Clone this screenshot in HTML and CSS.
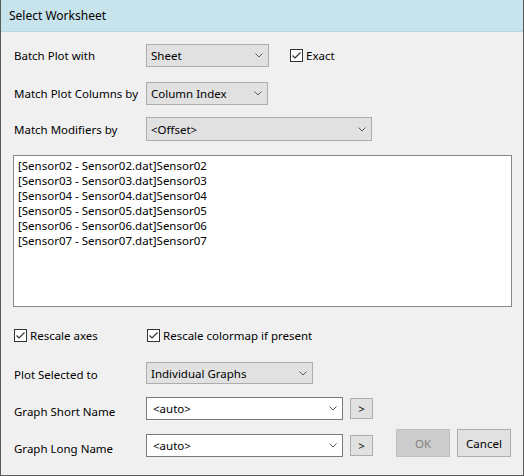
FILE: index.html
```html
<!DOCTYPE html>
<html>
<head>
<meta charset="utf-8">
<link rel="stylesheet" href="styles.css">
</head>
<body>
<div class="window">
  <div class="titlebar">Select Worksheet</div>
  <div class="content">
    <div class="row r1">
      <span class="label">Batch Plot with</span>
      <div class="select w-sheet"><span>Sheet</span><svg class="chev" width="8" height="5" viewBox="0 0 8 5"><path d="M0.5 0.5 L4 4 L7.5 0.5" fill="none" stroke="#5a5a5a" stroke-width="1"/></svg></div>
      <label class="check exact"><svg class="box" width="13" height="13" viewBox="0 0 13 13"><rect x="0.5" y="0.5" width="12" height="12" fill="#fff" stroke="#333"/><path d="M2.5 6.5 L5 9 L10.5 3.5" fill="none" stroke="#333" stroke-width="1.2"/></svg><span>Exact</span></label>
    </div>
    <div class="row r2">
      <span class="label">Match Plot Columns by</span>
      <div class="select w-col"><span>Column Index</span><svg class="chev" width="8" height="5" viewBox="0 0 8 5"><path d="M0.5 0.5 L4 4 L7.5 0.5" fill="none" stroke="#5a5a5a" stroke-width="1"/></svg></div>
    </div>
    <div class="row r3">
      <span class="label">Match Modifiers by</span>
      <div class="select w-off"><span>&lt;Offset&gt;</span><svg class="chev" width="8" height="5" viewBox="0 0 8 5"><path d="M0.5 0.5 L4 4 L7.5 0.5" fill="none" stroke="#5a5a5a" stroke-width="1"/></svg></div>
    </div>
    <div class="listbox">
      <div class="item">[Sensor02 - Sensor02.dat]Sensor02</div>
      <div class="item">[Sensor03 - Sensor03.dat]Sensor03</div>
      <div class="item">[Sensor04 - Sensor04.dat]Sensor04</div>
      <div class="item">[Sensor05 - Sensor05.dat]Sensor05</div>
      <div class="item">[Sensor06 - Sensor06.dat]Sensor06</div>
      <div class="item">[Sensor07 - Sensor07.dat]Sensor07</div>
    </div>
    <div class="row checks">
      <label class="check c1"><svg class="box" width="13" height="13" viewBox="0 0 13 13"><rect x="0.5" y="0.5" width="12" height="12" fill="#fff" stroke="#333"/><path d="M2.5 6.5 L5 9 L10.5 3.5" fill="none" stroke="#333" stroke-width="1.2"/></svg><span>Rescale axes</span></label>
      <label class="check c2"><svg class="box" width="13" height="13" viewBox="0 0 13 13"><rect x="0.5" y="0.5" width="12" height="12" fill="#fff" stroke="#333"/><path d="M2.5 6.5 L5 9 L10.5 3.5" fill="none" stroke="#333" stroke-width="1.2"/></svg><span>Rescale colormap if present</span></label>
    </div>
    <div class="row r4">
      <span class="label low2">Plot Selected to</span>
      <div class="select w-ind"><span>Individual Graphs</span><svg class="chev" width="8" height="5" viewBox="0 0 8 5"><path d="M0.5 0.5 L4 4 L7.5 0.5" fill="none" stroke="#5a5a5a" stroke-width="1"/></svg></div>
    </div>
    <div class="row r5">
      <span class="label low4">Graph Short Name</span>
      <div class="combo"><span>&lt;auto&gt;</span><svg class="chev" width="8" height="5" viewBox="0 0 8 5"><path d="M0.5 0.5 L4 4 L7.5 0.5" fill="none" stroke="#5a5a5a" stroke-width="1"/></svg></div>
      <div class="more">&gt;</div>
    </div>
    <div class="row r6">
      <div class="left">
        <span class="label low4">Graph Long Name</span>
        <div class="combo"><span>&lt;auto&gt;</span><svg class="chev" width="8" height="5" viewBox="0 0 8 5"><path d="M0.5 0.5 L4 4 L7.5 0.5" fill="none" stroke="#5a5a5a" stroke-width="1"/></svg></div>
        <div class="more">&gt;</div>
      </div>
      <div class="buttons">
        <div class="btn disabled">OK</div>
        <div class="btn">Cancel</div>
      </div>
    </div>
  </div>
</div>
</body>
</html>
```
FILE: styles.css
```css
* { box-sizing: border-box; }
html, body { margin: 0; padding: 0; }
body {
  font-family: "Noto Sans", "Open Sans", sans-serif;
  font-size: 11.5px;
  color: #000;
  background: #f0f0f0;
}
.window {
  width: 524px;
  height: 476px;
  border: 1px solid #5a5a5a;
  border-top: none;
  background: #f0f0f0;
  display: flex;
  flex-direction: column;
}
.titlebar {
  height: 32px;
  background: #c7e4ec;
  border-bottom: 1px solid #b7d6df;
  padding-left: 8px;
  line-height: 31px;
  font-size: 12px;
  flex: none;
}
.content {
  padding: 12px 12px 0 12px;
  display: flex;
  flex-direction: column;
}
.row {
  display: flex;
  align-items: center;
}
.label {
  width: 133px;
  padding-left: 1px;
  flex: none;
  white-space: nowrap;
}
.low2 { padding-top: 3px; }
.low4 { padding-top: 6px; }
.select, .combo {
  display: flex;
  align-items: center;
  justify-content: space-between;
  border: 1px solid #adadad;
  background: #e1e1e1;
  padding: 0 5px 0 4px;
  height: 23px;
}
.select span, .combo span { white-space: nowrap; }
.chev { flex: none; }
.w-sheet { width: 123px; }
.w-col { width: 122px; }
.w-off { width: 226px; height: 24px; }
.w-ind { width: 167px; height: 22px; }
.r2 { margin-top: 15px; }
.r3 { margin-top: 12px; }
.check {
  display: flex;
  align-items: center;
  gap: 3px;
  white-space: nowrap;
}
.check .box { flex: none; }
.exact { margin-left: 21px; }
.listbox {
  margin-top: 14px;
  height: 152px;
  width: 499px;
  background: #fff;
  border: 1px solid #828790;
  padding: 2px 4px;
  line-height: 15px;
}
.item {
  height: 15px;
  white-space: nowrap;
}
.checks {
  margin-top: 20px;
  height: 16px;
}
.c1 { margin-left: 1px; width: 133px; }
.r4 { margin-top: 19px; }
.combo {
  background: #fff;
  border-color: #7a7a7a;
  width: 197px;
  padding-left: 6px;
}
.more {
  width: 23px;
  height: 21px;
  margin-left: 7px;
  border: 1px solid #adadad;
  background: #e1e1e1;
  display: flex;
  align-items: center;
  justify-content: center;
}
.r5 { margin-top: 13px; }
.r6 {
  margin-top: 9px;
  align-items: flex-end;
  justify-content: space-between;
}
.left { display: flex; align-items: center; }
.buttons { display: flex; gap: 7px; }
.btn {
  width: 54px;
  height: 28px;
  border: 1px solid #adadad;
  background: #e1e1e1;
  display: flex;
  align-items: center;
  justify-content: center;
}
.btn.disabled {
  background: #cccccc;
  border-color: #bfbfbf;
  color: #838383;
}
```
